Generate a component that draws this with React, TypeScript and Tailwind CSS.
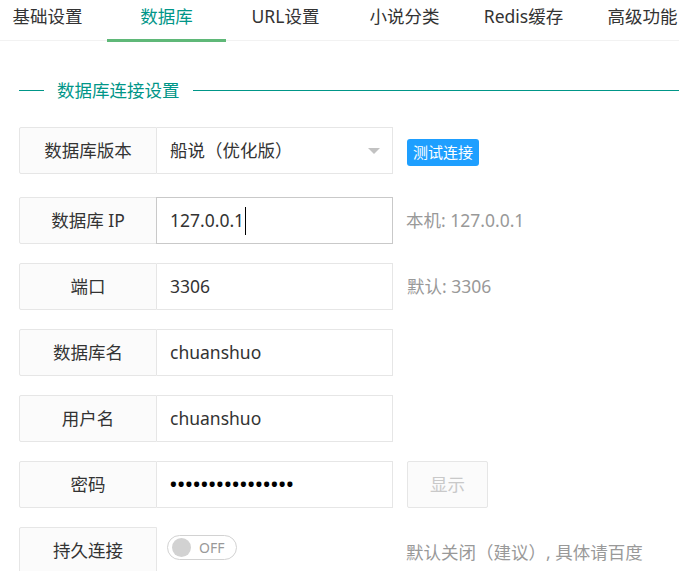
import React from "react";

const FONT = '"Noto Sans", "Noto Sans CJK SC", sans-serif';

const tabs = ["基础设置", "数据库", "URL设置", "小说分类", "Redis缓存", "高级功能"];

function Label({ children }: { children: React.ReactNode }) {
  return (
    <div className="flex h-[47px] w-[138px] shrink-0 items-center justify-center rounded-l-[2px] border border-[#e6e6e6] bg-[#fbfbfb] text-[#333]">
      {children}
    </div>
  );
}

function Field({
  label,
  children,
  focused,
  aside,
  className,
}: {
  label: string;
  children?: React.ReactNode;
  focused?: boolean;
  aside?: React.ReactNode;
  className?: string;
}) {
  return (
    <div className={"flex items-center " + (className ?? "")}>
      <Label>{label}</Label>
      <div
        className={
          "flex h-[47px] w-[236px] items-center bg-white pl-[13px] text-[#333] " +
          (focused
            ? "-ml-px w-[237px] border border-[#c9c9c9]"
            : "border-y border-r border-[#e6e6e6]")
        }
      >
        {children}
      </div>
      {aside}
    </div>
  );
}

export default function App() {
  return (
    <div className="h-[571px] w-[679px] overflow-hidden bg-white text-[17.5px] text-[#333]" style={{ fontFamily: FONT }}>
      {/* tab strip */}
      <div className="relative h-[41px] border-b border-[#f2f2f2]">
        <div className="-ml-[12px] flex">
          {tabs.map((t, i) => (
            <div key={t} className="relative h-[41px] w-[119px] shrink-0 text-center">
              <div className={"leading-[32px] " + (i === 1 ? "text-[#009688]" : "text-[#333]")}>{t}</div>
              {i === 1 && <div className="absolute bottom-[-1px] left-0 h-[3px] w-full bg-[#5fb878]" />}
            </div>
          ))}
        </div>
      </div>

      {/* section title */}
      <div className="mt-[37px] flex items-center pl-[19px]">
        <div className="h-px w-[25px] bg-[#009688]" />
        <div className="mx-[13px] leading-[24px] text-[#009688]">数据库连接设置</div>
        <div className="h-px flex-1 bg-[#009688]" />
      </div>

      <div className="mt-[25px] pl-[19px]">
        {/* version select */}
        <div className="flex items-center">
          <Label>数据库版本</Label>
          <div className="flex h-[47px] w-[236px] items-center justify-between border-y border-r border-[#e6e6e6] bg-white pl-[13px] pr-[12px]">
            <span>船说（优化版）</span>
            <span className="h-0 w-0 border-x-[6.5px] border-t-[6.5px] border-x-transparent border-t-[#c2c2c2]" />
          </div>
          <button className="ml-[14px] mt-[3px] h-[27px] rounded-[3px] bg-[#1e9fff] px-[6px] text-[15px] leading-[27px] text-white">
            测试连接
          </button>
        </div>

        <Field
          label="数据库 IP"
          focused
          className="mt-[23px]"
          aside={<span className="ml-[13px] text-[#999]">本机: 127.0.0.1</span>}
        >
          <span>127.0.0.1</span>
          <span className="ml-px h-[28px] w-px bg-black" />
        </Field>

        <Field label="端口" className="mt-[19px]" aside={<span className="ml-[14px] text-[#999]">默认: 3306</span>}>
          3306
        </Field>

        <Field label="数据库名" className="mt-[19px]">
          chuanshuo
        </Field>

        <Field label="用户名" className="mt-[19px]">
          chuanshuo
        </Field>

        <Field
          label="密码"
          className="mt-[19px]"
          aside={
            <div className="ml-[14px] flex h-[47px] w-[81px] items-center justify-center rounded-[2px] border border-[#e6e6e6] bg-[#fbfbfb] text-[#c9c9c9]">
              显示
            </div>
          }
        >
          <span className="text-[18px] font-bold tracking-[1px] text-black">••••••••••••••••</span>
        </Field>

        <div className="mt-[19px] flex items-start">
          <Label>持久连接</Label>
          <div className="ml-[10px] mt-[8px] flex h-[25px] w-[70px] items-center rounded-full border border-[#d2d2d2] pl-[4px]">
            <span className="h-[19px] w-[19px] rounded-full bg-[#d2d2d2]" />
            <span className="ml-[8px] text-[14px] text-[#999]">OFF</span>
          </div>
          <span className="ml-[169px] mt-[12px] text-[#999]">默认关闭（建议）, 具体请百度</span>
        </div>
      </div>
    </div>
  );
}
